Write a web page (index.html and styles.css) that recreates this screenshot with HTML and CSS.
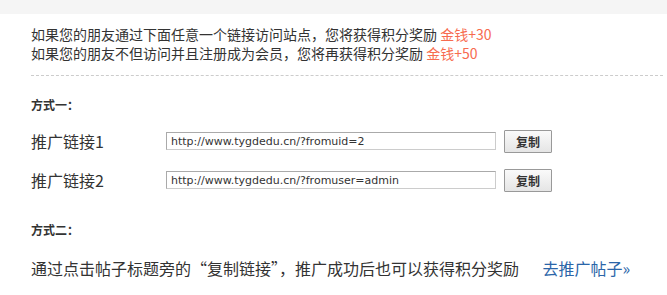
FILE: index.html
```html
<!DOCTYPE html>
<html lang="zh-CN">
<head>
    <meta charset="UTF-8">
    <title>推广链接</title>
    <link rel="stylesheet" href="styles.css">
</head>
<body>

<div class="topbar"></div>

<div class="promo">
    <div class="intro">
        <p>如果您的朋友通过下面任意一个链接访问站点，您将获得积分奖励 <span class="reward">金钱+30</span></p>
        <p>如果您的朋友不但访问并且注册成为会员，您将再获得积分奖励 <span class="reward">金钱+50</span></p>
    </div>

    <h3 class="way-title">方式一：</h3>
    <div class="link-row">
        <label class="link-label">推广链接1</label>
        <input class="link-input" type="text" value="http://www.tygdedu.cn/?fromuid=2" readonly>
        <button class="copy-btn">复制</button>
    </div>
    <div class="link-row">
        <label class="link-label">推广链接2</label>
        <input class="link-input" type="text" value="http://www.tygdedu.cn/?fromuser=admin" readonly>
        <button class="copy-btn">复制</button>
    </div>

    <h3 class="way-title second">方式二：</h3>
    <p class="way-text">通过点击帖子标题旁的“复制链接”，推广成功后也可以获得积分奖励 <a class="go-link" href="#">去推广帖子»</a></p>
</div>

</body>
</html>
```

FILE: styles.css
```css
body {
    margin: 0;
    background-color: #fff;
    font-family: "Noto Sans CJK SC", "Microsoft YaHei", sans-serif;
    color: #333;
}

.topbar {
    height: 14px;
    background-color: #f5f5f5;
}

.promo {
    padding: 11px 4px 0 31px;
}

.intro {
    font-size: 14px;
    line-height: 19px;
    padding-bottom: 12px;
    border-bottom: 1px dashed #ccc;
}

.intro p {
    margin: 0;
}

.reward {
    color: #f76b4f;
}

.way-title {
    margin: 20px 0 0;
    font-size: 12px;
    line-height: 18px;
    font-weight: bold;
}

.way-title.second {
    margin-top: 29px;
}

.link-row {
    display: flex;
    align-items: center;
    height: 24px;
    margin-top: 15px;
}

.link-row + .link-row {
    margin-top: 15px;
}

.link-label {
    width: 135px;
    font-size: 16px;
}

.link-input {
    box-sizing: border-box;
    width: 330px;
    height: 18px;
    padding: 0 4px;
    border: 1px solid #ccc;
    border-top-color: #aaa;
    border-left-color: #aaa;
    font-family: "DejaVu Sans", Tahoma, sans-serif;
    font-size: 11px;
    color: #333;
}

.copy-btn {
    box-sizing: border-box;
    width: 48px;
    height: 23px;
    margin-left: 8px;
    padding: 0;
    border: 1px solid #999;
    border-radius: 1px;
    background: linear-gradient(#fafafa, #e5e5e5);
    font-family: "Noto Sans CJK SC", sans-serif;
    font-size: 12px;
    font-weight: bold;
    color: #333;
}

.way-text {
    margin: 18px 0 0;
    font-size: 16px;
    line-height: 22px;
}

.go-link {
    margin-left: 20px;
    color: #2b65a8;
    text-decoration: none;
}
```
